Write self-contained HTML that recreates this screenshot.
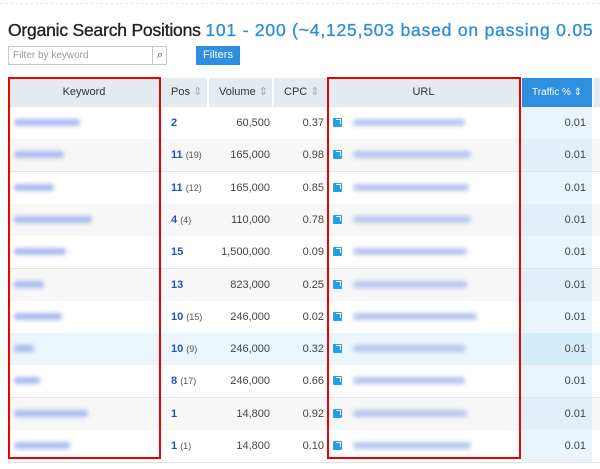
<!DOCTYPE html><html><head><style>
body{margin:0;width:600px;height:469px;overflow:hidden;background:#fff;font-family:"Liberation Sans",Arial,sans-serif;position:relative}
.a{position:absolute}
h1{position:absolute;left:8px;top:20px;margin:0;width:592px;overflow:hidden;font-size:17.5px;font-weight:normal;color:#222;white-space:nowrap;-webkit-text-stroke:0.35px #222;letter-spacing:-0.2px}
h1 span{color:#2b8fd8;-webkit-text-stroke:0.35px #2b8fd8;letter-spacing:0.8px}
.hd{position:absolute;top:78px;height:29px;background:#e3ebf1;font-size:11px;color:#333;line-height:29px}
.row{position:absolute;left:8px;width:592px;height:32px;border-bottom:1px solid #e4e4e4}
.c{position:absolute;font-size:11px;color:#444;line-height:32px}
.kw{position:absolute;left:6px;top:12px;height:7px;background:#a9bcef;filter:blur(2px);border-radius:3px}
.url{position:absolute;left:345px;top:12px;height:7px;background:#b8c5ef;filter:blur(2px);border-radius:3px}
.ic{position:absolute;left:325px;top:11px;width:9px;height:9px;background:#2a9be6;border-radius:1px}
.ic:after{content:"";position:absolute;left:3px;top:1px;width:4px;height:4px;border-top:1.5px solid #fff;border-right:1.5px solid #fff}
.p{position:absolute;left:163px;font-size:11px;font-weight:bold;color:#2255bb;line-height:32px}
.p small{font-weight:normal;color:#555;font-size:9px}
.tr{position:absolute;left:514px;width:70px;height:32px;background:#e8f3fc}
.box{position:absolute;border:2px solid #e00;box-sizing:border-box}
</style></head><body>
<div class="a" style="left:0;top:3px;width:600px;border-top:1px dashed #e6e6e6"></div>
<h1>Organic Search Positions <span>101 - 200 (~4,125,503 based on passing 0.05</span></h1>
<div class="a" style="left:8px;top:46px;width:159px;height:19px;border:1px solid #c8c8c8;box-sizing:border-box;font-size:10px;color:#999;line-height:17px;padding-left:4px">Filter by keyword</div>
<div class="a" style="left:152px;top:46px;width:14px;height:19px;border-left:1px solid #c8c8c8;font-size:11px;line-height:18px;text-align:center;color:#333">⌕</div>
<div class="a" style="left:196px;top:46px;width:44px;height:19px;background:#2e90de;color:#fff;font-size:11px;line-height:19px;text-align:center">Filters</div>

<div class="hd" style="left:8px;width:152px;text-align:center">Keyword</div>
<div class="hd" style="left:162px;width:45px;padding-left:9px;box-sizing:border-box">Pos <span style="color:#aaa">⇕</span></div>
<div class="hd" style="left:209px;width:63px;padding-left:10px;box-sizing:border-box">Volume <span style="color:#aaa">⇕</span></div>
<div class="hd" style="left:274px;width:52px;padding-left:10px;box-sizing:border-box">CPC <span style="color:#aaa">⇕</span></div>
<div class="hd" style="left:327px;width:193px;text-align:center">URL</div>
<div class="hd" style="left:522px;width:70px;background:#2e90de;color:#fff;text-align:center;font-size:10px">Traffic % ⇕</div>
<div class="hd" style="left:594px;width:6px"></div>

<div id="rows"></div>
<script>
var d=[[66,"2","","60,500","0.37",112],[50,"11","(19)","165,000","0.98",118],[40,"11","(12)","165,000","0.85",116],[78,"4","(4)","110,000","0.78",118],[52,"15","","1,500,000","0.09",114],[30,"13","","823,000","0.25",114],[48,"10","(15)","246,000","0.02",124],[20,"10","(9)","246,000","0.32",112],[26,"8","(17)","246,000","0.66",112],[74,"1","","14,800","0.92",114],[56,"1","(1)","14,800","0.10",118]];
var h="";
d.forEach(function(r,i){var t=107+i*32.3;var bg=i==7?"#eaf6fb":(i%2?"#f7f7f7":"#fff");
h+='<div class="row" style="top:'+t+'px;background:'+bg+'"><div class="tr" style="background:'+(i==7?"#d5ecfa":(i%2?"#e3eef8":"#eaf4fd"))+'"></div><div class="kw" style="width:'+r[0]+'px"></div><div class="p">'+r[1]+(r[2]?' <small>'+r[2]+'</small>':'')+'</div><div class="c" style="right:330px">'+r[3]+'</div><div class="c" style="right:276px">'+r[4]+'</div><div class="ic"></div><div class="url" style="width:'+r[5]+'px"></div><div class="c" style="right:14px">0.01</div></div>';});
document.getElementById("rows").innerHTML=h;
</script>
<div class="box" style="left:8px;top:77px;width:153px;height:382px"></div>
<div class="box" style="left:327px;top:77px;width:194px;height:382px"></div>
</body></html>
